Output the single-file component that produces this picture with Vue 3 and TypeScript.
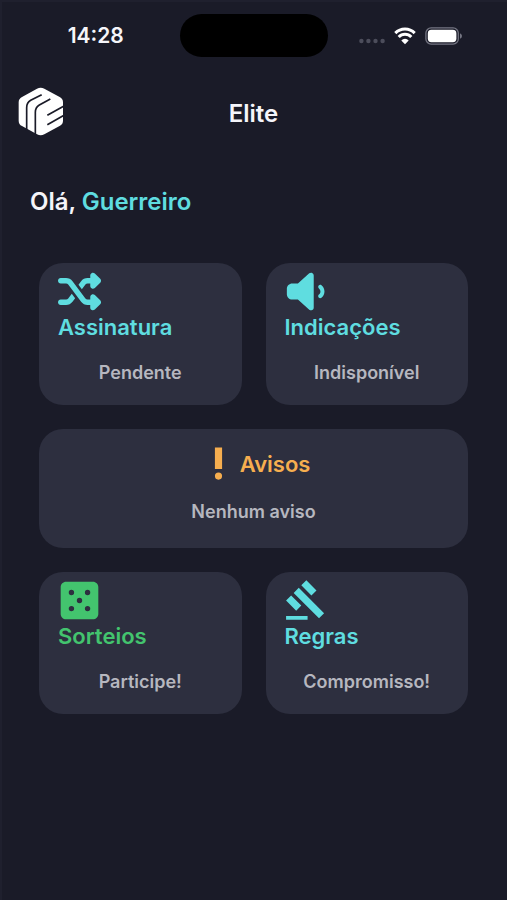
<script setup lang="ts">
interface Card {
  id: string
  title: string
  status: string
  tone: 'cyan' | 'amber' | 'green'
  wide?: boolean
  viewBox: string
  path: string
}

const cards: Card[] = [
  {
    id: 'assinatura',
    title: 'Assinatura',
    status: 'Pendente',
    tone: 'cyan',
    viewBox: '0 0 512 512',
    path: 'M403.8 34.4c12-5 25.7-2.2 34.9 6.9l64 64c6 6 9.4 14.1 9.4 22.6s-3.4 16.6-9.4 22.6l-64 64c-9.2 9.2-22.9 11.9-34.9 6.9s-19.8-16.6-19.8-29.6V160H352c-10.1 0-19.6 4.7-25.6 12.8L284 229.3 244 176l31.2-41.6C293.3 110.2 321.8 96 352 96h32V64c0-12.9 7.8-24.6 19.8-29.6zM164 282.7L204 336l-31.2 41.6C154.7 401.8 126.2 416 96 416H32c-17.7 0-32-14.3-32-32s14.3-32 32-32H96c10.1 0 19.6-4.7 25.6-12.8L164 282.7zm274.6 188c-9.2 9.2-22.9 11.9-34.9 6.9s-19.8-16.6-19.8-29.6V416H352c-30.2 0-58.7-14.2-76.8-38.4L121.6 172.8c-6-8.1-15.5-12.8-25.6-12.8H32c-17.7 0-32-14.3-32-32s14.3-32 32-32H96c30.2 0 58.7 14.2 76.8 38.4L326.4 339.2c6 8.1 15.5 12.8 25.6 12.8h32V320c0-12.9 7.8-24.6 19.8-29.6s25.7-2.2 34.9 6.9l64 64c6 6 9.4 14.1 9.4 22.6s-3.4 16.6-9.4 22.6l-64 64z',
  },
  {
    id: 'indicacoes',
    title: 'Indicações',
    status: 'Indisponível',
    tone: 'cyan',
    viewBox: '-22 0 512 512',
    path: 'M301.1 34.8C312.6 40 320 51.4 320 64V448c0 12.6-7.4 24-18.9 29.2s-25 3.1-34.4-5.3L131.8 352H64c-35.3 0-64-28.7-64-64V224c0-35.3 28.7-64 64-64h67.8L266.7 40.1c9.4-8.4 22.9-10.4 34.4-5.3zM412.6 182c-10.28-8.334-25.41-6.867-33.75 3.402c-8.406 10.24-6.906 25.35 3.375 33.74C393.5 228.4 400 241.8 400 256c0 14.17-6.5 27.59-17.81 36.83c-10.28 8.396-11.78 23.5-3.375 33.74c4.719 5.806 11.62 8.802 18.56 8.802c5.344 0 10.75-1.779 15.19-5.399C435.1 311.5 448 284.6 448 256S435.1 200.4 412.6 182z',
  },
  {
    id: 'avisos',
    title: 'Avisos',
    status: 'Nenhum aviso',
    tone: 'amber',
    wide: true,
    viewBox: '0 0 24 24',
    path: 'M10 3h4v12h-4zM10 19a2 2 0 1 0 4 0a2 2 0 1 0-4 0z',
  },
  {
    id: 'sorteios',
    title: 'Sorteios',
    status: 'Participe!',
    tone: 'green',
    viewBox: '-32 0 512 512',
    path: 'M64 32C28.7 32 0 60.7 0 96V416c0 35.3 28.7 64 64 64H384c35.3 0 64-28.7 64-64V96c0-35.3-28.7-64-64-64H64zM96 160a32 32 0 1 1 64 0a32 32 0 1 1-64 0zM96 352a32 32 0 1 1 64 0a32 32 0 1 1-64 0zM192 256a32 32 0 1 1 64 0a32 32 0 1 1-64 0zM288 160a32 32 0 1 1 64 0a32 32 0 1 1-64 0zM288 352a32 32 0 1 1 64 0a32 32 0 1 1-64 0z',
  },
  {
    id: 'regras',
    title: 'Regras',
    status: 'Compromisso!',
    tone: 'cyan',
    viewBox: '0.4 0.3 24 24',
    path: 'M1 21h12v2H1zM5.245 8.07l2.83-2.827 14.14 14.142-2.828 2.828zM12.317 1l5.657 5.656-2.83 2.83-5.654-5.66zM3.825 9.485l5.657 5.657-2.828 2.828-5.657-5.657z',
  },
]
</script>

<template>
  <div class="screen">
    <div class="status-bar">
      <time class="clock">14:28</time>
      <div class="island"></div>
      <div class="indicators">
        <svg class="signal" viewBox="0 0 26 18" aria-hidden="true">
          <circle cx="2.4" cy="14" r="2.2" />
          <circle cx="9.4" cy="14" r="2.2" />
          <circle cx="16.5" cy="14" r="2.2" />
          <circle cx="23.6" cy="14" r="2.2" />
        </svg>
        <svg class="wifi" viewBox="0 0 22 18" aria-hidden="true">
          <path class="arc" d="M1.3 6.1a13.6 13.6 0 0 1 19.4 0M4.7 10a8.8 8.8 0 0 1 12.6 0" />
          <path d="M11 17.2l-3.7-3.8a5.2 5.2 0 0 1 7.4 0z" />
        </svg>
        <svg class="battery" viewBox="0 0 38 18" aria-hidden="true">
          <rect class="shell" x="0.9" y="0.9" width="32.4" height="16.2" rx="5.2" />
          <rect x="2.8" y="2.8" width="28.6" height="12.4" rx="3.6" />
          <path class="tip" d="M35 6.2q2 .9 2 2.8t-2 2.8z" />
        </svg>
      </div>
    </div>

    <header class="header">
      <svg class="logo" viewBox="24 20 138 147" aria-hidden="true">
        <path
          class="logo-body"
          d="M81 25Q92 19 103 25L149 50Q159 55 159 66V121Q159 131 150 136L103 162Q92 168 81 162L36 137Q26 132 26 121V66Q26 55 36 50Z"
        />
        <path
          class="logo-cut"
          d="M50 152V82Q50 67 62 60L95 43M76 166V96Q76 81 88 74L121 56M112 105L162 77M112 133L162 105"
        />
      </svg>
      <h1 class="title">Elite</h1>
    </header>

    <main>
      <p class="greeting">Olá, <span class="name">Guerreiro</span></p>
      <div class="cards">
        <button
          v-for="card in cards"
          :key="card.id"
          type="button"
          class="card"
          :class="[card.tone, { wide: card.wide }]"
        >
          <span class="card-head">
            <svg class="icon" :viewBox="card.viewBox" aria-hidden="true">
              <path fill-rule="evenodd" :d="card.path" />
            </svg>
            <span class="card-title">{{ card.title }}</span>
          </span>
          <span class="card-status">{{ card.status }}</span>
        </button>
      </div>
    </main>
  </div>
</template>

<style>
body {
  background: #1a1b28;
}
</style>

<style scoped>
.screen {
  box-sizing: border-box;
  min-height: 100vh;
  padding-top: 14px;
  background: #1a1b28;
  box-shadow: inset 2px 2px 0 #1f202e;
  color: #f5f5fa;
  font-family: Inter, 'Liberation Sans', sans-serif;
  font-weight: 600;
}

.status-bar {
  display: grid;
  grid-template-columns: 1fr auto 1fr;
  align-items: center;
  padding: 0 12px;
}

.clock {
  justify-self: center;
  font-size: 21px;
  line-height: 28px;
}

.island {
  width: 148px;
  height: 43px;
  border-radius: 22px;
  background: #000;
}

.indicators {
  display: flex;
  justify-content: center;
  gap: 9px;
  fill: #fff;
}

.signal {
  width: 26px;
  height: 18px;
  fill: #4c4d5b;
}

.wifi {
  width: 22px;
  height: 18px;
}

.arc {
  fill: none;
  stroke: #fff;
  stroke-width: 3;
}

.battery {
  width: 38px;
  height: 18px;
}

.shell {
  fill: none;
  stroke: #747582;
  stroke-width: 1.3;
}

.tip {
  fill: #747582;
}

.header {
  display: grid;
  grid-template-columns: 1fr auto 1fr;
  align-items: end;
  padding: 30px 18px 0;
}

.logo {
  width: 46px;
  height: 49px;
}

.logo-body {
  fill: #fff;
}

.logo-cut {
  fill: none;
  stroke: #1a1b28;
  stroke-width: 5;
}

.title {
  margin: 0;
  font-size: 24px;
  font-weight: 600;
  line-height: 44px;
}

.greeting {
  margin: 52px 30px 0;
  font-size: 24px;
  line-height: 28px;
}

.name {
  color: #5fdde0;
}

.cards {
  display: grid;
  grid-template-columns: 1fr 1fr;
  gap: 24px;
  padding: 47px 39px 24px;
}

.card {
  display: flex;
  flex-direction: column;
  gap: 20px;
  padding: 7px 19px 20px;
  border: 0;
  border-radius: 24px;
  background: #2d2f3f;
  font: inherit;
  text-align: left;
  cursor: pointer;
}

.card-head {
  display: flex;
  flex-direction: column;
}

.wide {
  grid-column: 1 / -1;
  gap: 15px;
  padding: 13px 19px 24px;
}

.wide .card-head {
  flex-direction: row;
  align-items: center;
  justify-content: center;
}

.icon {
  width: 43px;
  height: 43px;
  fill: currentColor;
}

.card-title {
  font-size: 22px;
  line-height: 28px;
}

.card-status {
  color: #b6b7bf;
  font-size: 18px;
  line-height: 24px;
  text-align: center;
}

.cyan {
  color: #5fdde0;
}

.amber {
  color: #f6ae4f;
}

.green {
  color: #43c46e;
}
</style>
